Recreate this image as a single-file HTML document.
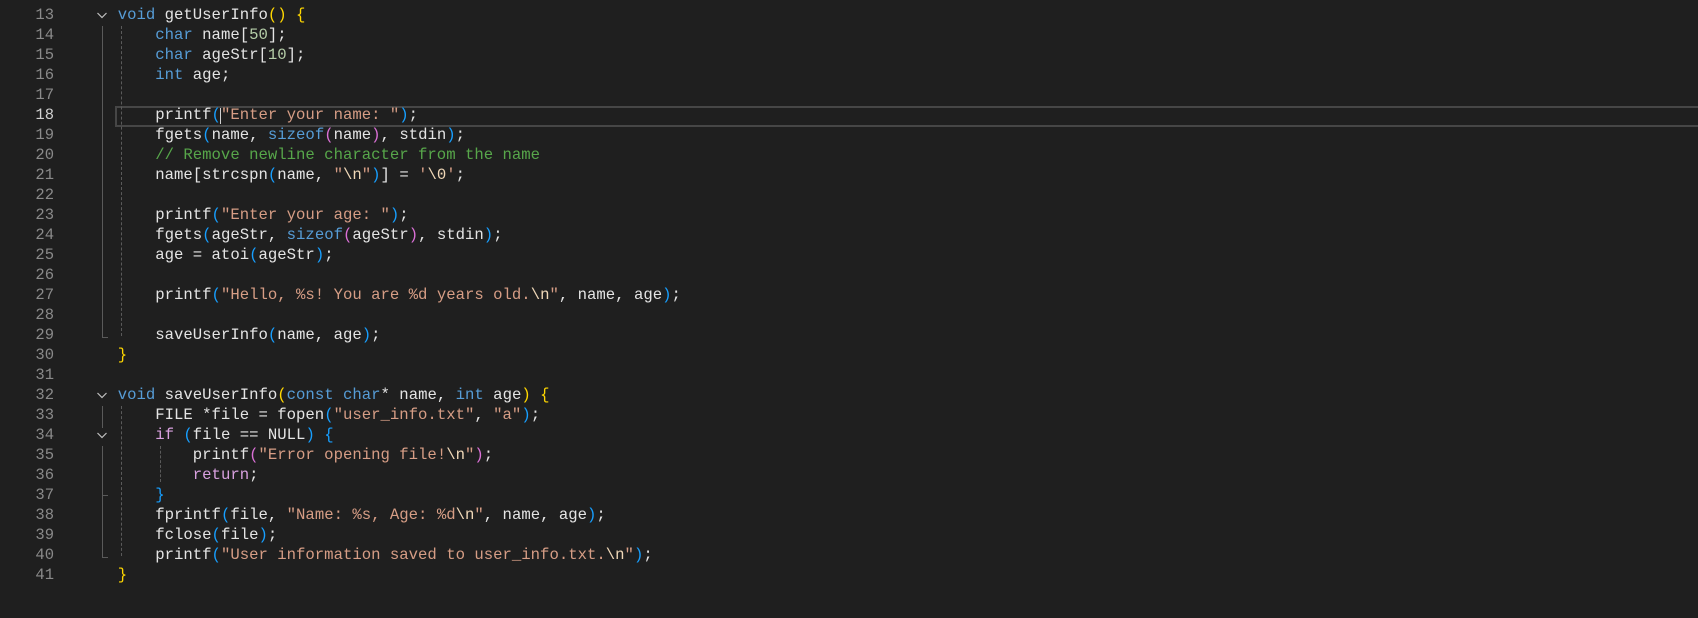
<!DOCTYPE html>
<html><head><meta charset="utf-8"><style>
html,body{margin:0;padding:0;background:#1f1f1f;width:1698px;height:618px;overflow:hidden;}
.ln{position:absolute;left:0;width:54px;text-align:right;font:15.5px/20px "Liberation Mono",monospace;color:#8a8a8a;}
.ln.a{color:#d0d0d0;}
.c{position:absolute;left:117.7px;font:15.65px/20px "Liberation Mono",monospace;color:#e4e4e4;white-space:pre;}
.k{color:#569cd6}.s{color:#d69d85}.cm{color:#57a64a}.n{color:#b5cea8}.y{color:#ffd700}.b{color:#179fff}.p{color:#da70d6}.r{color:#d8a0df}.e{color:#f0d8b8}
.g{position:absolute;width:0;}
</style></head><body>
<div style="position:absolute;left:115px;top:106px;width:1600px;height:17px;border:2px solid #464646;"></div>
<div style="position:absolute;left:219.5px;top:108px;width:1.5px;height:16px;background:#d0d0d0;"></div>

<div class="g" style="left:102px;top:26px;height:312px;border-left:1px solid #5a5a5a"></div>
<div class="g" style="left:102px;top:337px;width:6px;border-top:1px solid #5a5a5a"></div>
<div class="g" style="left:121px;top:26px;height:310px;border-left:1px dashed #5a5a5a"></div>
<div class="g" style="left:102px;top:406px;height:22px;border-left:1px solid #5a5a5a"></div>
<div class="g" style="left:102px;top:446px;height:112px;border-left:1px solid #5a5a5a"></div>
<div class="g" style="left:102px;top:557px;width:6px;border-top:1px solid #5a5a5a"></div>
<div class="g" style="left:121px;top:406px;height:150px;border-left:1px dashed #5a5a5a"></div>
<div class="g" style="left:102px;top:495px;width:6px;border-top:1px solid #5a5a5a"></div>
<div class="g" style="left:160px;top:446px;height:36px;border-left:1px dashed #5a5a5a"></div>

<svg style="position:absolute;left:0;top:0" width="120" height="618">
<g fill="none" stroke="#c0c0c0" stroke-width="1.2">
<path d="M97.5 13l4.5 4.5 4.5-4.5"/>
<path d="M97.5 393l4.5 4.5 4.5-4.5"/>
<path d="M97.5 433l4.5 4.5 4.5-4.5"/>
</g></svg>

<div class="ln" style="top:-15px">12</div>
<div class="ln" style="top:5px">13</div><div class="c" style="top:5px"><span class="k">void</span> getUserInfo<span class="y">()</span> <span class="y">{</span></div>
<div class="ln" style="top:25px">14</div><div class="c" style="top:25px">    <span class="k">char</span> name[<span class="n">50</span>];</div>
<div class="ln" style="top:45px">15</div><div class="c" style="top:45px">    <span class="k">char</span> ageStr[<span class="n">10</span>];</div>
<div class="ln" style="top:65px">16</div><div class="c" style="top:65px">    <span class="k">int</span> age;</div>
<div class="ln" style="top:85px">17</div>
<div class="ln a" style="top:105px">18</div><div class="c" style="top:105px">    printf<span class="b">(</span><span class="s">"Enter your name: "</span><span class="b">)</span>;</div>
<div class="ln" style="top:125px">19</div><div class="c" style="top:125px">    fgets<span class="b">(</span>name, <span class="k">sizeof</span><span class="p">(</span>name<span class="p">)</span>, stdin<span class="b">)</span>;</div>
<div class="ln" style="top:145px">20</div><div class="c" style="top:145px">    <span class="cm">// Remove newline character from the name</span></div>
<div class="ln" style="top:165px">21</div><div class="c" style="top:165px">    name[strcspn<span class="b">(</span>name, <span class="s">"</span><span class="e">\n</span><span class="s">"</span><span class="b">)</span>] = <span class="s">'</span><span class="e">\0</span><span class="s">'</span>;</div>
<div class="ln" style="top:185px">22</div>
<div class="ln" style="top:205px">23</div><div class="c" style="top:205px">    printf<span class="b">(</span><span class="s">"Enter your age: "</span><span class="b">)</span>;</div>
<div class="ln" style="top:225px">24</div><div class="c" style="top:225px">    fgets<span class="b">(</span>ageStr, <span class="k">sizeof</span><span class="p">(</span>ageStr<span class="p">)</span>, stdin<span class="b">)</span>;</div>
<div class="ln" style="top:245px">25</div><div class="c" style="top:245px">    age = atoi<span class="b">(</span>ageStr<span class="b">)</span>;</div>
<div class="ln" style="top:265px">26</div>
<div class="ln" style="top:285px">27</div><div class="c" style="top:285px">    printf<span class="b">(</span><span class="s">"Hello, %s! You are %d years old.</span><span class="e">\n</span><span class="s">"</span>, name, age<span class="b">)</span>;</div>
<div class="ln" style="top:305px">28</div>
<div class="ln" style="top:325px">29</div><div class="c" style="top:325px">    saveUserInfo<span class="b">(</span>name, age<span class="b">)</span>;</div>
<div class="ln" style="top:345px">30</div><div class="c" style="top:345px"><span class="y">}</span></div>
<div class="ln" style="top:365px">31</div>
<div class="ln" style="top:385px">32</div><div class="c" style="top:385px"><span class="k">void</span> saveUserInfo<span class="y">(</span><span class="k">const</span> <span class="k">char</span>* name, <span class="k">int</span> age<span class="y">)</span> <span class="y">{</span></div>
<div class="ln" style="top:405px">33</div><div class="c" style="top:405px">    FILE *file = fopen<span class="b">(</span><span class="s">"user_info.txt"</span>, <span class="s">"a"</span><span class="b">)</span>;</div>
<div class="ln" style="top:425px">34</div><div class="c" style="top:425px">    <span class="r">if</span> <span class="b">(</span>file == NULL<span class="b">)</span> <span class="b">{</span></div>
<div class="ln" style="top:445px">35</div><div class="c" style="top:445px">        printf<span class="p">(</span><span class="s">"Error opening file!</span><span class="e">\n</span><span class="s">"</span><span class="p">)</span>;</div>
<div class="ln" style="top:465px">36</div><div class="c" style="top:465px">        <span class="r">return</span>;</div>
<div class="ln" style="top:485px">37</div><div class="c" style="top:485px">    <span class="b">}</span></div>
<div class="ln" style="top:505px">38</div><div class="c" style="top:505px">    fprintf<span class="b">(</span>file, <span class="s">"Name: %s, Age: %d</span><span class="e">\n</span><span class="s">"</span>, name, age<span class="b">)</span>;</div>
<div class="ln" style="top:525px">39</div><div class="c" style="top:525px">    fclose<span class="b">(</span>file<span class="b">)</span>;</div>
<div class="ln" style="top:545px">40</div><div class="c" style="top:545px">    printf<span class="b">(</span><span class="s">"User information saved to user_info.txt.</span><span class="e">\n</span><span class="s">"</span><span class="b">)</span>;</div>
<div class="ln" style="top:565px">41</div><div class="c" style="top:565px"><span class="y">}</span></div>
</body></html>
